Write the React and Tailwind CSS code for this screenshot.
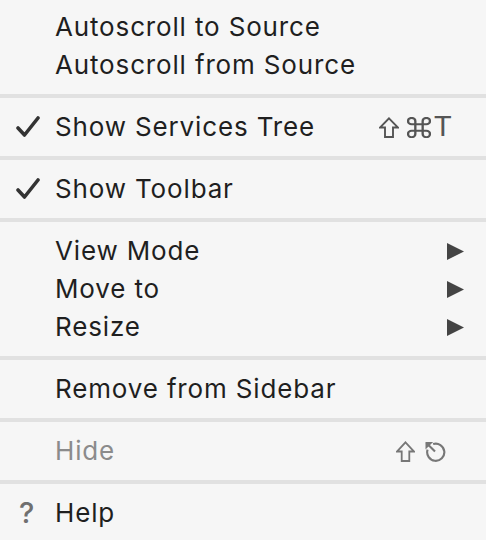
import React from "react";

const Shift = ({ color = "#555", w = 20, h = 21 }) => (
  <svg width={w} height={h} viewBox="0 0 20 21" preserveAspectRatio="none" className="shrink-0">
    <polygon points="10,1.3 19,10.5 14,10.5 14,20 6,20 6,10.5 1,10.5" fill="none" stroke={color} strokeWidth="1.9" strokeLinejoin="miter" />
  </svg>
);

const Cmd = () => (
  <svg width="24" height="21" viewBox="2.2 2.2 19.6 19.6" preserveAspectRatio="none" className="shrink-0">
    <path d="M15 6v12a3 3 0 1 0 3-3H6a3 3 0 1 0 3 3V6a3 3 0 1 0-3 3h12a3 3 0 1 0-3-3" fill="none" stroke="#555" strokeWidth="1.9" />
  </svg>
);

const Esc = () => (
  <svg width="23" height="21" viewBox="0 0 23 22" className="shrink-0">
    <path d="M9 3.2 A9 9 0 1 1 3.2 9" fill="none" stroke="#777" strokeWidth="2.2" />
    <path d="M2 2 L11 11" stroke="#777" strokeWidth="2.2" />
    <polygon points="1,1 9,1 1,9" fill="#777" />
  </svg>
);

const Check = () => (
  <svg width="24" height="22" viewBox="0 0 24 22">
    <path d="M2 12 L8.5 19 L22 2" fill="none" stroke="#333" strokeWidth="3.6" strokeLinecap="round" strokeLinejoin="round" />
  </svg>
);

const Arrow = () => (
  <svg width="17" height="17" viewBox="0 0 17 17">
    <polygon points="0,0 17,8.5 0,17" fill="#444" />
  </svg>
);

const Row = ({ left, label, right, dim }) => (
  <div className="flex items-center h-[38px]">
    <div className="w-[55px] flex items-center pl-[16px] shrink-0">{left}</div>
    <div className={`flex-1 whitespace-nowrap tracking-[0.85px] ${dim ? "text-[#8b8b8b]" : "text-[#1f1f1f]"}`}>{label}</div>
    {right}
  </div>
);

const Sep = () => <div className="h-[4px] bg-[#e1e1e1]" />;

export default function App() {
  return (
    <div className="w-[486px] h-[540px] overflow-hidden bg-[#f6f6f6] font-['Inter',sans-serif] text-[26px] leading-[38px]">
      <div className="pt-[8px] pb-[10px]">
        <Row label="Autoscroll to Source" />
        <Row label="Autoscroll from Source" />
      </div>
      <Sep />
      <div className="py-[10px]">
        <Row
          left={<Check />}
          label="Show Services Tree"
          right={
            <div className="flex items-center pr-[35px] text-[#555]">
              <Shift w={20} h={21} />
              <span className="w-[8px]" />
              <Cmd />
              <span className="w-[3px]" />
              <span className="text-[27px] scale-x-110 inline-block">T</span>
            </div>
          }
        />
      </div>
      <Sep />
      <div className="py-[10px]">
        <Row left={<Check />} label="Show Toolbar" />
      </div>
      <Sep />
      <div className="py-[10px]">
        <Row label="View Mode" right={<div className="pr-[22px] flex items-center"><Arrow /></div>} />
        <Row label="Move to" right={<div className="pr-[22px] flex items-center"><Arrow /></div>} />
        <Row label="Resize" right={<div className="pr-[22px] flex items-center"><Arrow /></div>} />
      </div>
      <Sep />
      <div className="py-[10px]">
        <Row label="Remove from Sidebar" />
      </div>
      <Sep />
      <div className="py-[10px]">
        <Row
          label="Hide"
          dim
          right={
            <div className="flex items-center gap-[9px] pr-[39px]">
              <Shift color="#777" w={19} h={21} />
              <Esc />
            </div>
          }
        />
      </div>
      <Sep />
      <div className="py-[10px]">
        <Row left={<span className="text-[#707070] text-[29px] font-medium pl-[3px]">?</span>} label="Help" />
      </div>
    </div>
  );
}
